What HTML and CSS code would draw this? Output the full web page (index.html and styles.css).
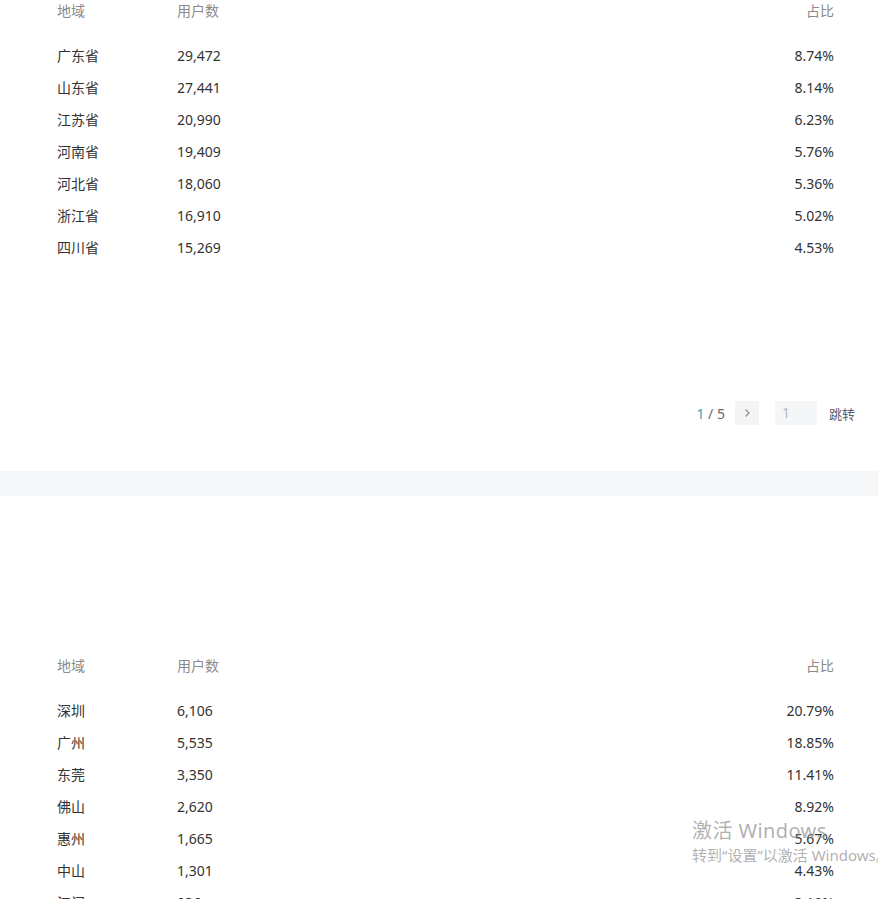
FILE: index.html
```html
<!DOCTYPE html>
<html lang="zh-CN">
  <head>
    <meta charset="UTF-8" />
    <title>地域分布</title>
    <link rel="stylesheet" href="styles.css">
  </head>
  <body>
    <!-- 省份分布 -->
    <div class="card card-top">
      <div class="table">
        <div class="row head">
          <span class="c1">地域</span><span class="c2">用户数</span><span class="c3">占比</span>
        </div>
        <div class="row"><span class="c1">广东省</span><span class="c2">29,472</span><span class="c3">8.74%</span></div>
        <div class="row"><span class="c1">山东省</span><span class="c2">27,441</span><span class="c3">8.14%</span></div>
        <div class="row"><span class="c1">江苏省</span><span class="c2">20,990</span><span class="c3">6.23%</span></div>
        <div class="row"><span class="c1">河南省</span><span class="c2">19,409</span><span class="c3">5.76%</span></div>
        <div class="row"><span class="c1">河北省</span><span class="c2">18,060</span><span class="c3">5.36%</span></div>
        <div class="row"><span class="c1">浙江省</span><span class="c2">16,910</span><span class="c3">5.02%</span></div>
        <div class="row"><span class="c1">四川省</span><span class="c2">15,269</span><span class="c3">4.53%</span></div>
      </div>
      <!-- 分页 -->
      <div class="pager">
        <span class="pages"><em>1</em> / 5</span>
        <span class="next">
          <svg width="10" height="10" viewBox="0 0 10 10"><path d="M3.5 1.5 L7 5 L3.5 8.5" fill="none" stroke="#8a8d93" stroke-width="1.2"/></svg>
        </span>
        <span class="jump-input">1</span>
        <span class="jump">跳转</span>
      </div>
    </div>
    <div class="gap"></div>
    <!-- 城市分布 -->
    <div class="card card-bottom">
      <div class="table">
        <div class="row head">
          <span class="c1">地域</span><span class="c2">用户数</span><span class="c3">占比</span>
        </div>
        <div class="row"><span class="c1">深圳</span><span class="c2">6,106</span><span class="c3">20.79%</span></div>
        <div class="row"><span class="c1">广州</span><span class="c2">5,535</span><span class="c3">18.85%</span></div>
        <div class="row"><span class="c1">东莞</span><span class="c2">3,350</span><span class="c3">11.41%</span></div>
        <div class="row"><span class="c1">佛山</span><span class="c2">2,620</span><span class="c3">8.92%</span></div>
        <div class="row"><span class="c1">惠州</span><span class="c2">1,665</span><span class="c3">5.67%</span></div>
        <div class="row"><span class="c1">中山</span><span class="c2">1,301</span><span class="c3">4.43%</span></div>
        <div class="row"><span class="c1">江门</span><span class="c2">936</span><span class="c3">3.19%</span></div>
      </div>
    </div>
    <!-- 系统水印 -->
    <div class="watermark">
      <div class="wm-big">激活 Windows</div>
      <div class="wm-small">转到“设置”以激活 Windows。</div>
    </div>
  </body>
</html>
```

FILE: styles.css
```css
/* 初始化 */
* {
  margin: 0;
  padding: 0;
  box-sizing: border-box;
}
body {
  width: 878px;
  height: 899px;
  overflow: hidden;
  background: #fff;
  font-family: "Segoe UI", "Noto Sans", "Noto Sans CJK SC", sans-serif;
  font-size: 14px;
  color: #333;
  position: relative;
}
/* 卡片 */
.card {
  padding: 0 44px 0 57px;
}
.card-top {
  height: 471px;
}
.card-bottom {
  padding-top: 159px;
}
.gap {
  height: 25px;
  background: #f5f6f8;
}
/* 表格 */
.row {
  display: flex;
  align-items: center;
  height: 32px;
  line-height: 32px;
}
.row.head {
  height: 22px;
  line-height: 22px;
  margin-bottom: 18px;
  color: #8a8a8a;
}
.c1 {
  width: 120px;
}
.c2 {
  flex: 1;
}
.c3 {
  text-align: right;
}
/* 分页 */
.pager {
  display: flex;
  align-items: center;
  justify-content: flex-end;
  margin-top: 137px;
  margin-right: -21px;
  height: 24px;
  font-size: 14px;
  color: #666a70;
}
.pages em {
  font-style: normal;
  color: #2aa4b8;
}
.next {
  width: 24px;
  height: 24px;
  margin-left: 10px;
  background: #f4f4f5;
  border-radius: 2px;
  display: flex;
  align-items: center;
  justify-content: center;
}
.jump-input {
  width: 42px;
  height: 24px;
  line-height: 24px;
  margin-left: 16px;
  padding-left: 7px;
  background: #f4f5f7;
  border-radius: 2px;
  color: #b8bbc0;
}
.jump {
  margin-left: 12px;
  font-size: 13px;
  color: #5a5e75;
}
/* 水印 */
.watermark {
  position: absolute;
  left: 692px;
  top: 818px;
  color: rgba(150, 150, 150, 0.75);
  white-space: nowrap;
  pointer-events: none;
}
.wm-big {
  font-size: 20px;
  line-height: 26px;
  letter-spacing: 0.4px;
}
.wm-small {
  font-size: 15px;
  line-height: 22px;
}
```
